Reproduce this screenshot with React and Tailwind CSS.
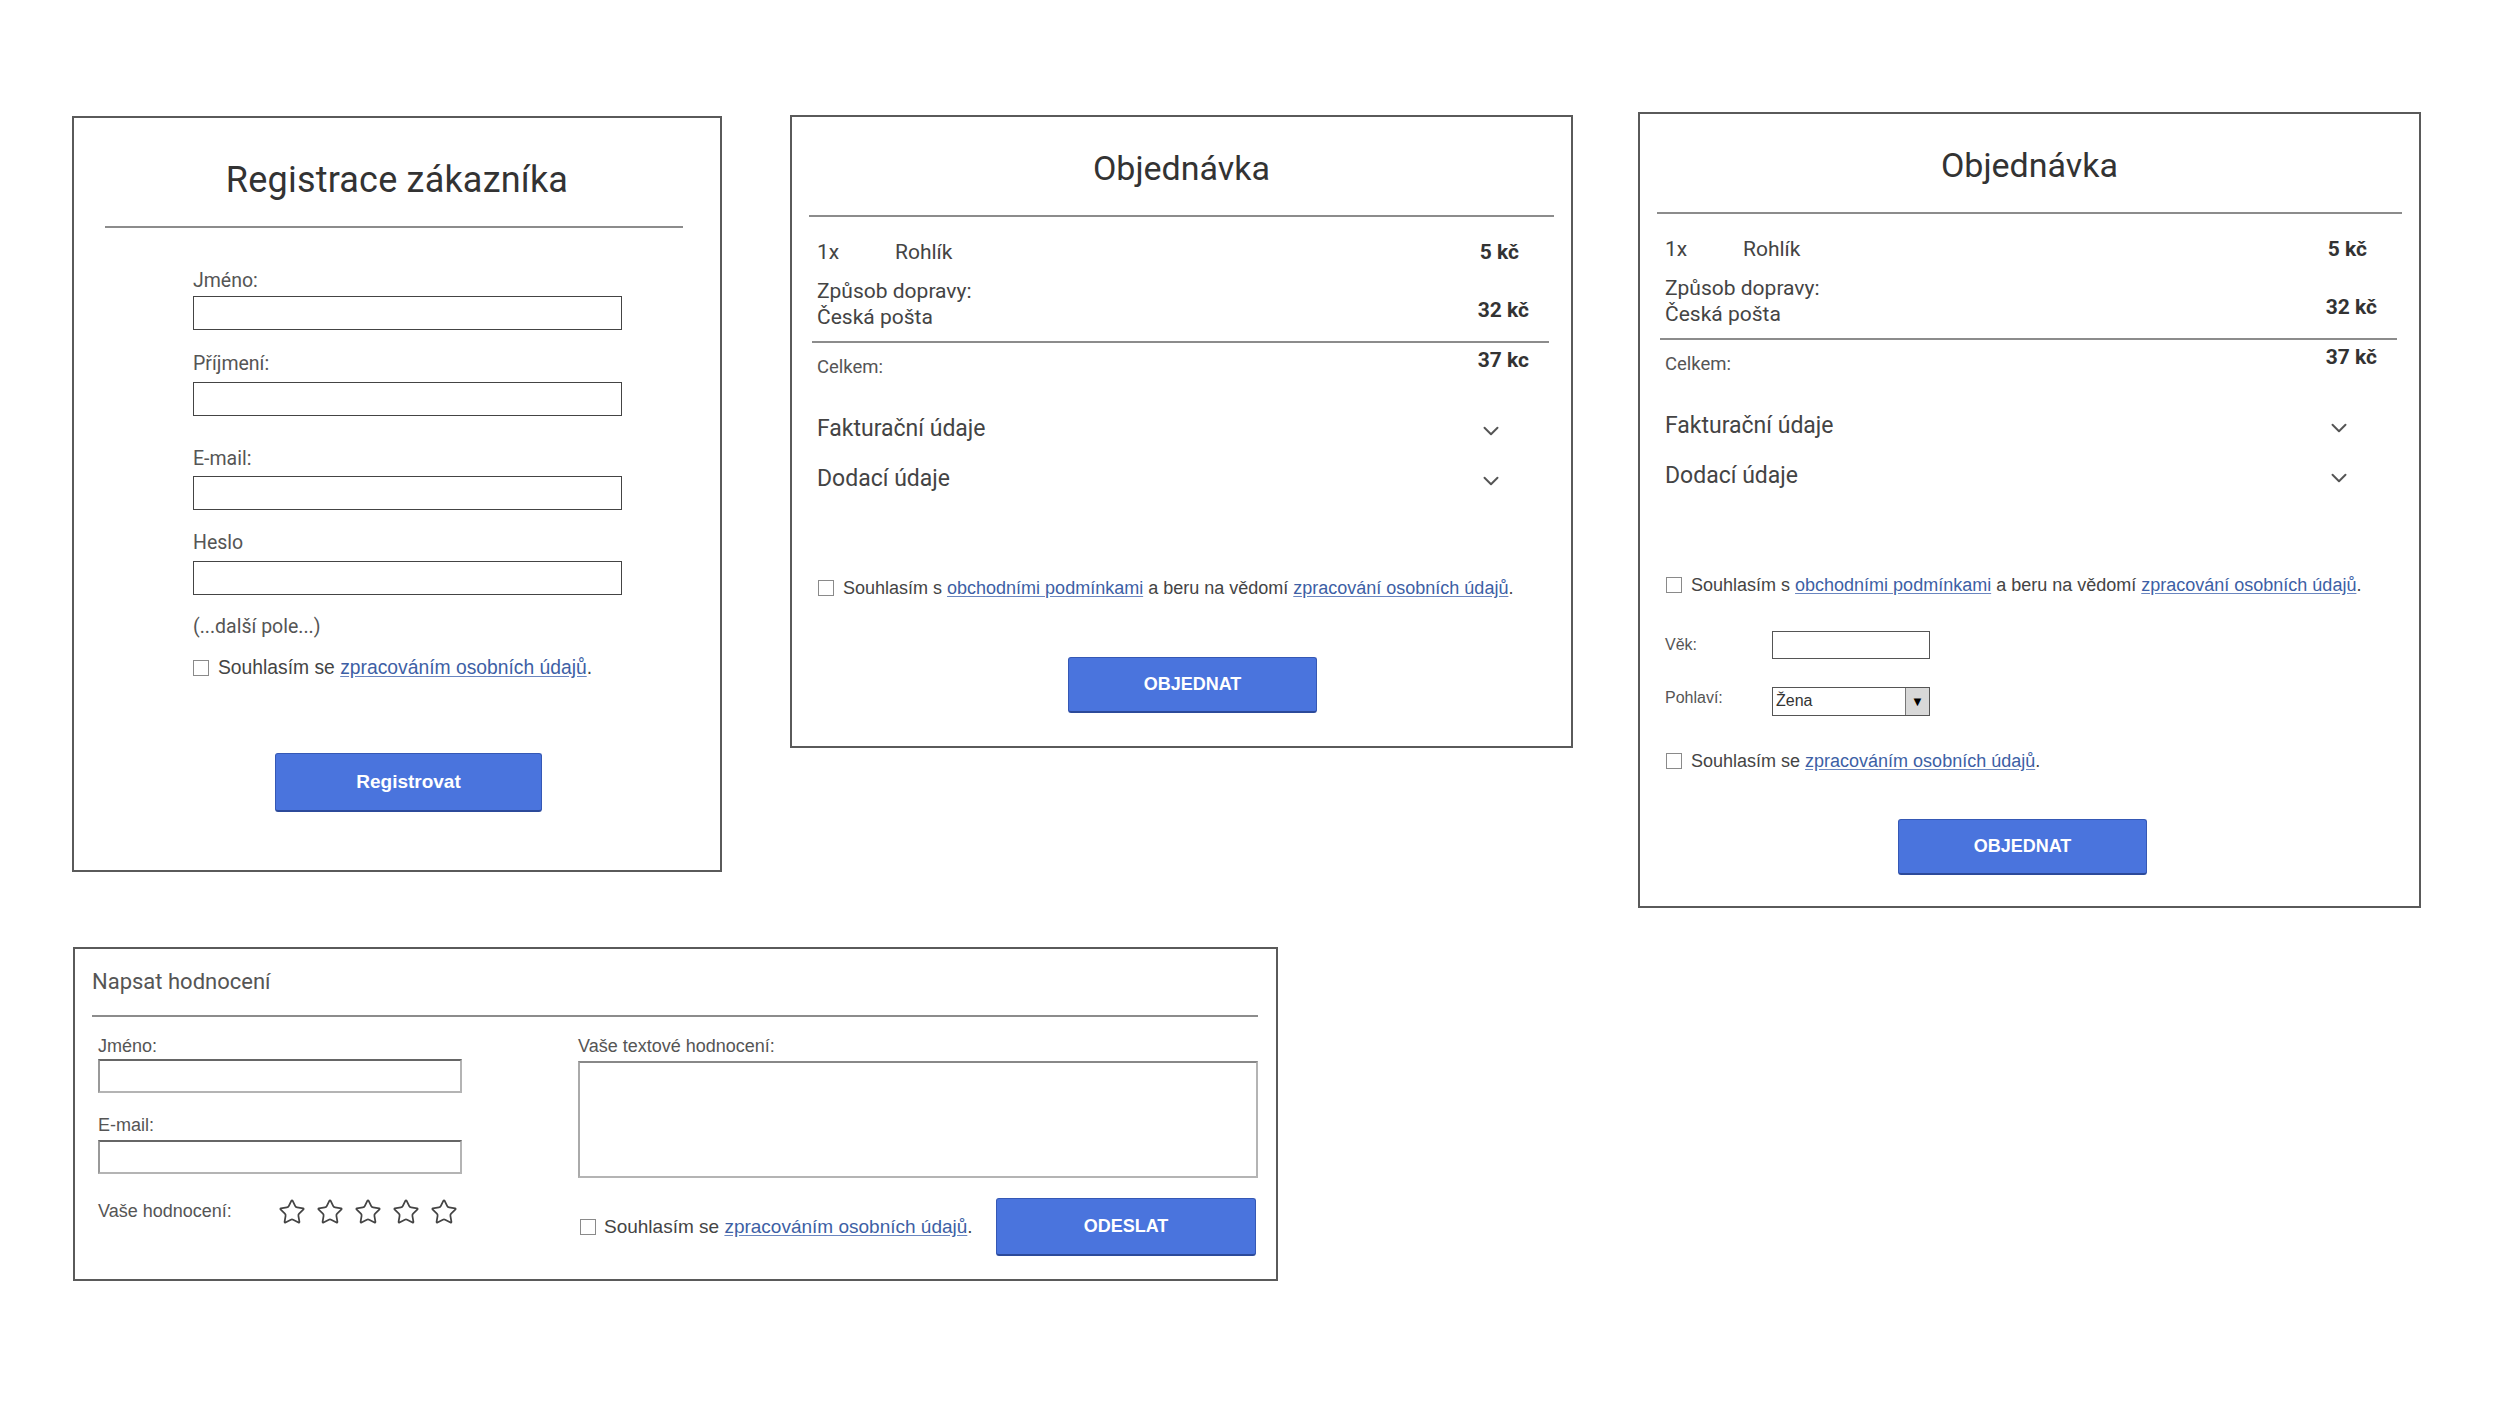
import React from "react";
import { ChevronDown, Star } from "lucide-react";

const roboto = { fontFamily: "Roboto, 'Liberation Sans', sans-serif" };
const arial = { fontFamily: "'Liberation Sans', Arial, sans-serif" };

function Box() {
  return <span className="inline-block w-[16px] h-[16px] border border-[#8a8a8a] bg-white shrink-0" />;
}

function Link({ children }) {
  return <span className="text-[#3d5fa5] underline underline-offset-2 decoration-[#6a86c0]">{children}</span>;
}

function RegCard() {
  const fields = [
    ["Jméno:", "mt-[43px]", "mt-[5px]"],
    ["Příjmení:", "mt-[24px]", "mt-[8px]"],
    ["E-mail:", "mt-[33px]", "mt-[7px]"],
    ["Heslo", "mt-[23px]", "mt-[8px]"],
  ];
  return (
    <div className="mt-[4px] w-[650px] h-[756px] border-2 border-[#5a5a5a] bg-white flex flex-col shrink-0">
      <div className="mt-[41px] h-[42px] text-center text-[36px] leading-[42px] text-[#333] tracking-[0.2px]" style={roboto}>
        Registrace zákazníka
      </div>
      <div className="mt-[25px] ml-[31px] w-[578px] h-[2px] bg-[#8c8c8c]" />
      <div className="ml-[119px] flex flex-col">
        {fields.map(([l, m1, m2]) => (
          <React.Fragment key={l}>
            <div className={`${m1} h-[20px] text-[19.5px] leading-[20px] text-[#555]`} style={roboto}>{l}</div>
            <div className={`${m2} w-[429px] h-[34px] border-[1.5px] border-[#444] bg-white`} />
          </React.Fragment>
        ))}
        <div className="mt-[22px] h-[20px] text-[19.5px] leading-[20px] text-[#555]" style={roboto}>(...další pole...)</div>
        <div className="mt-[21px] h-[20px] flex items-center gap-[9px] text-[19.3px] leading-[20px] text-[#444]" style={arial}>
          <Box />
          <span>Souhlasím se <Link>zpracováním osobních údajů</Link>.</span>
        </div>
      </div>
      <div className="mt-[75px] ml-[201px] w-[267px] h-[59px] rounded-[3px] bg-[#4a74dd] border border-[#3558b5] border-b-2 border-b-[#2c4a9a] flex items-center justify-center text-white font-bold text-[19px]" style={arial}>
        Registrovat
      </div>
    </div>
  );
}

function OrderCard({ extra, total, btnMl, className }) {
  return (
    <div className={`w-[783px] border-2 border-[#5a5a5a] bg-white flex flex-col shrink-0 ${className}`}>
      <div className="mt-[31px] h-[40px] text-center text-[34px] leading-[40px] text-[#333]" style={roboto}>
        Objednávka
      </div>
      <div className="mt-[27px] mx-[17px] h-[2px] bg-[#8c8c8c]" />
      <div className="pl-[25px] pr-[42px] flex flex-col text-[#444]" style={roboto}>
        <div className="mt-[22px] flex justify-between text-[21px] leading-[26px]">
          <div className="flex"><span className="w-[78px]">1x</span><span>Rohlík</span></div>
          <span className="font-bold text-[#333] mr-[10px]">5 kč</span>
        </div>
        <div className="mt-[13px] flex justify-between text-[21px] leading-[26px]">
          <div className="flex flex-col"><span>Způsob dopravy:</span><span>Česká pošta</span></div>
          <span className="mt-[19px] font-bold text-[#333]">32 kč</span>
        </div>
      </div>
      <div className="mt-[11px] ml-[20px] mr-[22px] h-[2px] bg-[#8c8c8c]" />
      <div className="pl-[25px] pr-[42px] flex flex-col text-[#444]" style={roboto}>
        <div className="flex justify-between items-start">
          <span className="mt-[11px] text-[18.5px] leading-[26px] text-[#555]">Celkem:</span>
          <span className="mt-[4px] text-[21px] leading-[26px] font-bold text-[#333]">{total}</span>
        </div>
        <div className="mt-[34px] h-[30px] flex justify-between items-center text-[23px] leading-[30px]">
          <span>Fakturační údaje</span>
          <ChevronDown size={26} strokeWidth={1.8} color="#555" className="mr-[25px] mt-[3px]" />
        </div>
        <div className="mt-[20px] h-[30px] flex justify-between items-center text-[23px] leading-[30px]">
          <span>Dodací údaje</span>
          <ChevronDown size={26} strokeWidth={1.8} color="#555" className="mr-[25px] mt-[3px]" />
        </div>
        <div className="mt-[83px] ml-[1px] h-[22px] flex items-center gap-[9px] text-[18px] leading-[22px] text-[#444]" style={arial}>
          <Box />
          <span>Souhlasím s <Link>obchodními podmínkami</Link> a beru na vědomí <Link>zpracování osobních údajů</Link>.</span>
        </div>
        {extra}
      </div>
      <div className={`${extra ? "mt-[47px]" : "mt-[58px]"} ${btnMl} w-[249px] h-[56px] rounded-[3px] bg-[#4a74dd] border border-[#3558b5] border-b-2 border-b-[#2c4a9a] flex items-center justify-center text-white font-bold text-[18px]`} style={arial}>
        OBJEDNAT
      </div>
    </div>
  );
}

function Extra() {
  return (
    <div className="flex flex-col text-[16px] text-[#555]" style={arial}>
      <div className="mt-[35px] flex items-center h-[28px]">
        <span className="w-[107px]">Věk:</span>
        <div className="w-[158px] h-[28px] border-[1.5px] border-[#555] bg-white" />
      </div>
      <div className="mt-[28px] flex items-start h-[29px]">
        <span className="w-[107px] leading-[20px] mt-[1px]">Pohlaví:</span>
        <div className="w-[158px] h-[29px] border-[1.5px] border-[#555] bg-white flex">
          <span className="flex-1 pl-[3px] leading-[26px] text-[#333]">Žena</span>
          <span className="w-[24px] h-full bg-[#d8d8d8] border-l border-[#777] flex items-center justify-center text-[13px] leading-none text-black">▼</span>
        </div>
      </div>
      <div className="mt-[34px] ml-[1px] h-[22px] flex items-center gap-[9px] text-[18px] leading-[22px] text-[#444]">
        <Box />
        <span>Souhlasím se <Link>zpracováním osobních údajů</Link>.</span>
      </div>
    </div>
  );
}

function ReviewCard() {
  const inp = "w-[364px] h-[34px] bg-white border-2 border-[#b4b4b4] border-t-[#666] border-l-[#999]";
  return (
    <div className="mt-[39px] ml-[73px] w-[1205px] h-[334px] border-2 border-[#5a5a5a] bg-white flex flex-col">
      <div className="mt-[19px] ml-[17px] h-[28px] text-[22px] leading-[28px] text-[#555]" style={roboto}>Napsat hodnocení</div>
      <div className="mt-[19px] ml-[17px] mr-[18px] h-[2px] bg-[#8c8c8c]" />
      <div className="flex text-[18px] text-[#555]" style={arial}>
        <div className="ml-[23px] w-[364px] flex flex-col">
          <div className="mt-[18px] h-[22px] leading-[22px]">Jméno:</div>
          <div className={`mt-[2px] ${inp}`} />
          <div className="mt-[21px] h-[22px] leading-[22px]">E-mail:</div>
          <div className={`mt-[4px] ${inp}`} />
          <div className="mt-[26px] h-[22px] flex items-center">
            <span className="w-[180px] leading-[22px]">Vaše hodnocení:</span>
            <div className="flex gap-[10px] mt-[2px]">
              {[0, 1, 2, 3, 4].map((i) => (
                <Star key={i} size={28} strokeWidth={1.5} color="#444" />
              ))}
            </div>
          </div>
        </div>
        <div className="ml-[116px] w-[680px] flex flex-col">
          <div className="mt-[18px] h-[22px] leading-[22px]">Vaše textové hodnocení:</div>
          <div className="mt-[4px] w-[680px] h-[117px] bg-white border-2 border-[#b4b4b4] border-t-[#888] border-l-[#aaa]" />
          <div className="mt-[20px] flex items-center justify-between">
            <div className="ml-[2px] flex items-center gap-[8px] text-[19px] text-[#444]">
              <Box />
              <span>Souhlasím se <Link>zpracováním osobních údajů</Link>.</span>
            </div>
            <div className="mr-[2px] w-[260px] h-[58px] rounded-[3px] bg-[#4a74dd] border border-[#3558b5] border-b-2 border-b-[#2c4a9a] flex items-center justify-center text-white font-bold text-[18px]">
              ODESLAT
            </div>
          </div>
        </div>
      </div>
    </div>
  );
}

export default function App() {
  return (
    <div className="w-[2500px] h-[1406px] bg-white overflow-hidden flex flex-col">
      <div className="flex items-start pt-[112px] pl-[72px]">
        <RegCard />
        <OrderCard total="37 kc" btnMl="ml-[276px]" className="ml-[68px] mt-[3px] h-[633px]" />
        <OrderCard total="37 kč" btnMl="ml-[258px]" className="ml-[65px] h-[796px]" extra={<Extra />} />
      </div>
      <ReviewCard />
    </div>
  );
}
